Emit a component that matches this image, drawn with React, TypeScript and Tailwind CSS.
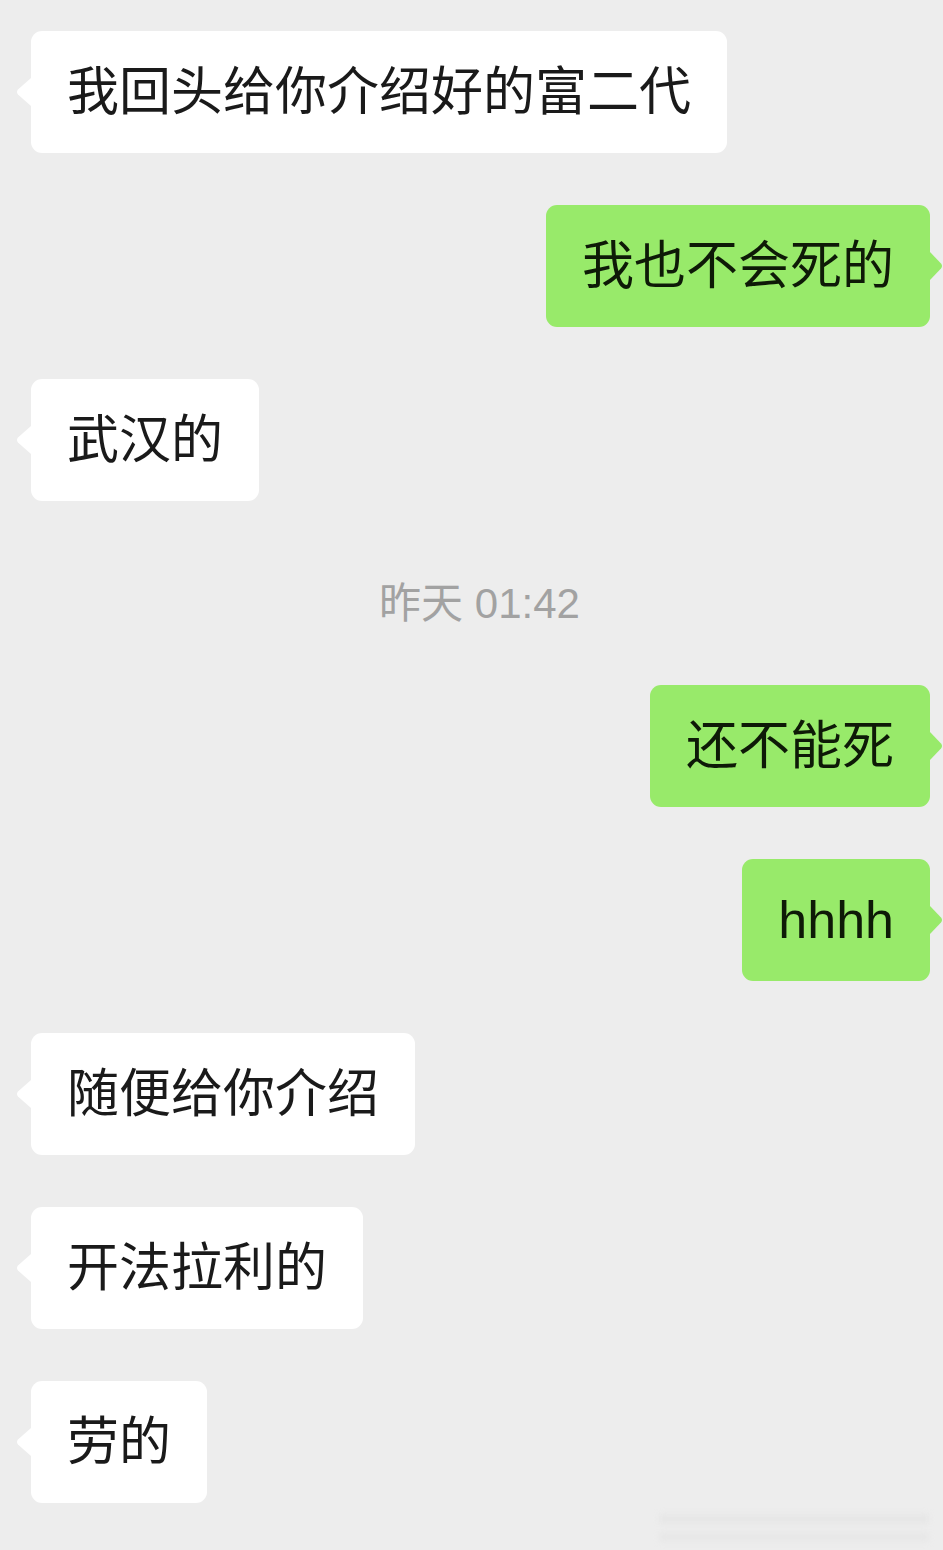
import React from 'react';

type Msg =
  | { kind: 'in' | 'out'; text: string }
  | { kind: 'time'; text: string };

const messages: Msg[] = [
  { kind: 'in', text: '我回头给你介绍好的富二代' },
  { kind: 'out', text: '我也不会死的' },
  { kind: 'in', text: '武汉的' },
  { kind: 'time', text: '昨天 01:42' },
  { kind: 'out', text: '还不能死' },
  { kind: 'out', text: 'hhhh' },
  { kind: 'in', text: '随便给你介绍' },
  { kind: 'in', text: '开法拉利的' },
  { kind: 'in', text: '劳的' },
];

const font = { fontFamily: '"Liberation Sans", "Noto Sans CJK SC", sans-serif' };

const Bubble: React.FC<{ side: 'in' | 'out'; text: string }> = ({ side, text }) => {
  const mine = side === 'out';
  return (
    <div className={`flex ${mine ? 'justify-end pr-[13px]' : 'justify-start pl-[31px]'}`}>
      <div
        className={`relative flex items-center h-[122px] px-[36px] rounded-[11px] text-[52px] leading-none ${
          mine ? 'bg-[#98ea6a] text-[#0e1a07]' : 'bg-white text-[#1a1a1a]'
        }`}
      >
        {mine ? (
          <svg className="absolute right-[-13px] top-1/2 -translate-y-1/2" width="13" height="28" viewBox="0 0 13 28">
            <path d="M0 0 L11 11.5 Q13 14 11 16.5 L0 28 Z" fill="#98ea6a" />
          </svg>
        ) : (
          <svg className="absolute left-[-15px] top-1/2 -translate-y-1/2" width="15" height="28" viewBox="0 0 15 28">
            <path d="M15 0 L2 11.5 Q0 14 2 16.5 L15 28 Z" fill="#ffffff" />
          </svg>
        )}
        <span className="whitespace-nowrap">{text}</span>
      </div>
    </div>
  );
};

export default function App() {
  return (
    <div className="relative w-[943px] min-h-[1550px] bg-[#ededed] overflow-hidden" style={font}>
      <div className="flex flex-col pt-[31px]">
        {messages.map((m, i) => {
          const prev = messages[i - 1];
          if (m.kind === 'time') {
            return (
              <div key={i} className="flex justify-center pl-[16px] mt-[82px] mb-[60px] text-[42px] leading-[42px] text-[#a2a2a2]">
                {m.text}
              </div>
            );
          }
          const mt = i === 0 || prev?.kind === 'time' ? 'mt-0' : 'mt-[52px]';
          return (
            <div key={i} className={mt}>
              <Bubble side={m.kind} text={m.text} />
            </div>
          );
        })}
      </div>

      <div className="absolute right-[14px] bottom-[8px] flex flex-col gap-[8px] items-end opacity-60 blur-[3px]">
        <div className="w-[270px] h-[10px] bg-[#e2e2e2]" />
        <div className="w-[270px] h-[10px] bg-[#e4e4e4]" />
      </div>
    </div>
  );
}
